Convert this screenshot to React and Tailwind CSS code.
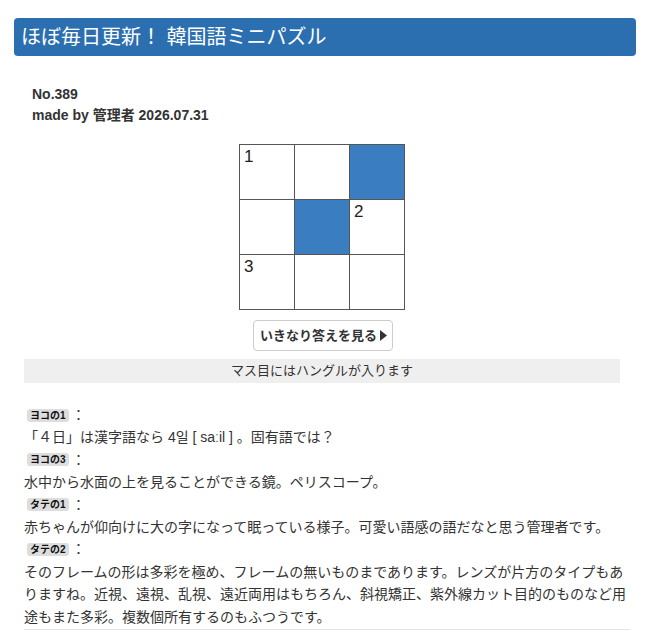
import React from 'react';

const FONT = { fontFamily: '"Liberation Sans", "Noto Sans CJK JP", sans-serif' };

const GRID = [
  [{ n: 1 }, {}, { black: true }],
  [{}, { black: true }, { n: 2 }],
  [{ n: 3 }, {}, {}],
];

const CLUES = [
  { label: 'ヨコの1', text: '「４日」は漢字語なら 4일 [ saːil ] 。固有語では？' },
  { label: 'ヨコの3', text: '水中から水面の上を見ることができる鏡。ペリスコープ。' },
  { label: 'タテの1', text: '赤ちゃんが仰向けに大の字になって眠っている様子。可愛い語感の語だなと思う管理者です。' },
  { label: 'タテの2', text: 'そのフレームの形は多彩を極め、フレームの無いものまであります。レンズが片方のタイプもありますね。近視、遠視、乱視、遠近両用はもちろん、斜視矯正、紫外線カット目的のものなど用途もまた多彩。複数個所有するのもふつうです。' },
];

function Puzzle() {
  return (
    <div className="grid grid-cols-[55px_55px_55px] border-l border-t border-[#555]">
      {GRID.flat().map((c, i) => (
        <div
          key={i}
          className={`h-[55px] border-r border-b border-[#555] pl-[4px] pt-[2px] text-[17px] leading-[20px] text-[#222] ${c.black ? 'bg-[#3a7dc1]' : 'bg-white'}`}
        >
          {c.n}
        </div>
      ))}
    </div>
  );
}

export default function App() {
  return (
    <div className="w-[650px] min-h-[643px] bg-white pt-[18px]" style={FONT}>
      <div className="mx-[14px] h-[38px] rounded-[4px] bg-[#2c6fb0] pl-[7px] flex items-center">
        <h1 className="text-[20px] text-white leading-none">ほぼ毎日更新！ 韓国語ミニパズル</h1>
      </div>

      <div className="px-[24px]">
        <div className="pl-[8px] pt-[28px] text-[14px] font-bold text-[#333] leading-[21px]">
          <div>No.389</div>
          <div>made by 管理者 2026.07.31</div>
        </div>

        <div className="mt-[18px] flex justify-center pl-[26px] pr-[32px]">
          <Puzzle />
        </div>

        <div className="mt-[10px] flex justify-center pl-[30px] pr-[34px]">
          <button className="h-[31px] rounded-[4px] border border-[#ccc] bg-white pl-[6px] pr-[5px] text-[13px] font-bold text-[#333] flex items-center gap-[3px]">
            いきなり答えを見る
            <svg width="7" height="11" viewBox="0 0 7 11"><path d="M0 0 L7 5.5 L0 11 Z" fill="#333" /></svg>
          </button>
        </div>

        <div className="mt-[8px] mr-[6px] h-[24px] bg-[#efefef] flex items-center justify-center text-[13px] text-[#333]">
          マス目にはハングルが入ります
        </div>

        <div className="mt-[21px] text-[14px] text-[#333] leading-[22.4px]">
          {CLUES.map((c) => (
            <div key={c.label}>
              <div className="flex h-[22.4px] items-center">
                <span className="ml-[3px] rounded-[3px] bg-[#ddd] px-[3px] text-[10px] font-bold leading-[13px] text-[#111]">{c.label}</span>
                <span className="ml-[3px]">：</span>
              </div>
              <p>{c.text}</p>
            </div>
          ))}
        </div>
        <div className="mt-[1px] mr-[-4px] border-t border-[#e5e5e5]" />
      </div>
    </div>
  );
}
